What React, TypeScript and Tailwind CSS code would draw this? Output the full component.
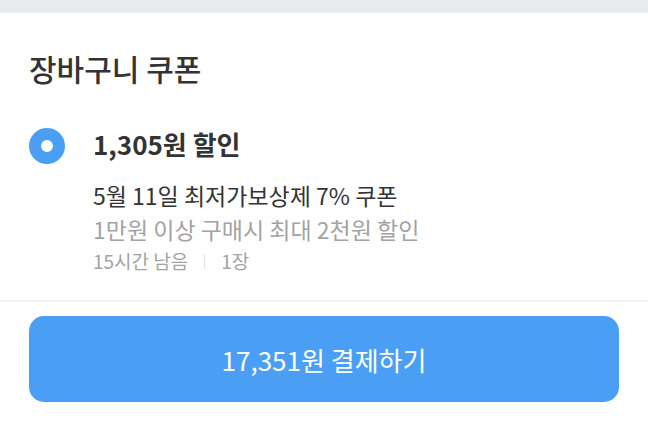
import type { ReactNode } from 'react';

// Selected-state radio: filled blue disc with a white centre dot
function Radio() {
  return (
    <span className="flex h-[36px] w-[36px] shrink-0 items-center justify-center rounded-full bg-[#4a9ff5]">
      <span className="h-[12px] w-[12px] rounded-full bg-white" />
    </span>
  );
}

function Meta({ children }: { children: ReactNode }) {
  return <span className="text-[19px] leading-[26px] text-[#a3a3a3]">{children}</span>;
}

export default function App() {
  return (
    <div className="h-[424px] w-[648px] overflow-hidden bg-white font-['Noto_Sans_CJK_KR',sans-serif]">
      <div className="h-[13px] bg-[#e9ecee]" />

      {/* Cart coupon section */}
      <section className="px-[29px] pt-[37px]">
        <h2 className="text-[30px] font-medium leading-[36px] text-[#333]">장바구니 쿠폰</h2>

        <div className="mt-[42px] flex items-start gap-[28px] pb-[26px]">
          <Radio />
          <div className="flex flex-col">
            <p className="text-[26px] font-bold leading-[32px] text-[#333]">1,305원 할인</p>
            <p className="mt-[20px] text-[23px] leading-[30px] text-[#333]">5월 11일 최저가보상제 7% 쿠폰</p>
            <p className="mt-[4px] text-[23px] leading-[30px] text-[#a3a3a3]">1만원 이상 구매시 최대 2천원 할인</p>
            <div className="mt-[4px] flex items-center">
              <Meta>15시간 남음</Meta>
              <span className="mx-[16px] h-[15px] w-px bg-[#e2e2e2]" />
              <Meta>1장</Meta>
            </div>
          </div>
        </div>
      </section>

      <div className="h-[2px] bg-[#f2f2f2]" />

      <div className="px-[29px] pt-[14px]">
        <button className="flex h-[86px] w-full items-center justify-center rounded-[15px] bg-[#4a9ff5] text-[26px] text-white">
          17,351원 결제하기
        </button>
      </div>
    </div>
  );
}
